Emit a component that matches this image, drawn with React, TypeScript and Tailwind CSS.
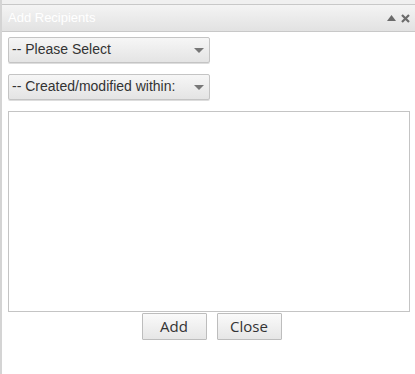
const App = () => {
  return (
    <div
      className="w-[415px] h-[374px] bg-[#f0f0f0] flex overflow-hidden"
      style={{ fontFamily: '"Liberation Sans", Arial, sans-serif' }}
    >
      <div className="w-[2px] bg-[#d4d4d4]" />
      <div className="flex-1 flex flex-col pt-[4px]">
        <div className="h-[28px] border-t border-b border-[#c8c8c8] bg-gradient-to-b from-[#f4f4f4] to-[#e2e2e2] flex items-center justify-between pl-[6px] pr-[5px]">
          <span className="text-[13px] text-white">Add Recipients</span>
          <div className="flex items-center gap-[5px]">
            <svg width="9" height="6" viewBox="0 0 9 6">
              <path d="M0 6 L4.5 0 L9 6 Z" fill="#6b6b6b" />
            </svg>
            <svg width="9" height="9" viewBox="0 0 9 9">
              <path d="M1 1 L8 8 M8 1 L1 8" stroke="#6b6b6b" strokeWidth="2.2" />
            </svg>
          </div>
        </div>
        <div className="flex-1 bg-white flex flex-col pl-[6px] pr-[5px] pt-[5px]">
          <div className="flex flex-col gap-[11px]">
            {["-- Please Select", "-- Created/modified within:"].map((label) => (
              <div
                key={label}
                className="w-[202px] h-[26px] rounded-[2px] border border-[#c4c4c4] bg-gradient-to-b from-[#f6f6f6] to-[#e4e4e4] flex items-center justify-between pl-[3px] pr-[5px] pb-[2px] shadow-[0_1px_0_#ddd]"
              >
                <span className="text-[14px] text-[#333]">{label}</span>
                <svg width="10" height="5" viewBox="0 0 10 5" className="mt-[3px]">
                  <path d="M0 0 L10 0 L5 5 Z" fill="#777" />
                </svg>
              </div>
            ))}
          </div>
          <div className="mt-[11px] w-[402px] h-[201px] border border-[#c4c4c4] bg-white" />
          <div className="flex justify-center gap-[10px] pl-[5px] mt-[1px]">
            <button
              className="w-[65px] h-[27px] border border-[#bdbdbd] rounded-[1px] bg-gradient-to-b from-[#fafafa] to-[#e6e6e6] text-[15px] text-[#333]"
              style={{ fontFamily: '"Open Sans", "Noto Sans", sans-serif' }}
            >
              Add
            </button>
            <button
              className="w-[65px] h-[27px] border border-[#bdbdbd] rounded-[1px] bg-gradient-to-b from-[#fafafa] to-[#e6e6e6] text-[15px] text-[#333]"
              style={{ fontFamily: '"Open Sans", "Noto Sans", sans-serif' }}
            >
              Close
            </button>
          </div>
        </div>
      </div>
    </div>
  );
};

export default App;
